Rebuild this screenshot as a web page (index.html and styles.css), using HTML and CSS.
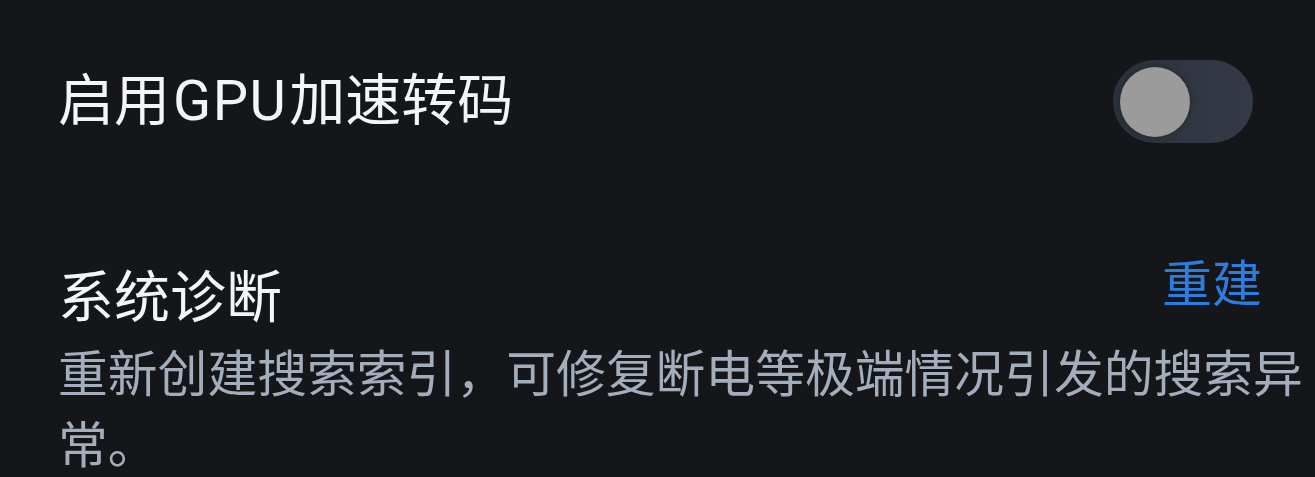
FILE: index.html
```html
<!DOCTYPE html>
<html lang="zh-CN">
<head>
<meta charset="utf-8">
<title>设置</title>
<link rel="stylesheet" href="styles.css">
</head>
<body>
<div class="settings">
  <div class="row row-toggle">
    <div class="row-title title-gpu">启用<span class="latin">GPU</span>加速转码</div>
    <div class="switch" role="switch" aria-checked="false">
      <div class="switch-knob"></div>
    </div>
  </div>
  <div class="row row-action">
    <div class="row-title title-diag">系统诊断</div>
    <div class="action">重建</div>
  </div>
  <div class="desc">重新创建搜索索引，可修复断电等极端情况引发的搜索异常。</div>
</div>
</body>
</html>
```

FILE: styles.css
```css
html, body {
  margin: 0;
  padding: 0;
  background: #14161a;
}
body {
  width: 1315px;
  height: 477px;
  overflow: hidden;
  font-family: Roboto, "Noto Sans CJK SC", sans-serif;
}
.settings {
  display: flex;
  flex-direction: column;
}
.row {
  display: flex;
  justify-content: space-between;
  align-items: flex-start;
}
.row-toggle {
  padding: 60px 62px 0 58px;
}
.row-title {
  font-size: 56px;
  line-height: 78px;
  color: #f4f5f6;
  white-space: nowrap;
}
.title-gpu {
  margin-top: 2px;
}
.latin {
  letter-spacing: 1.5px;
  margin: 0 2px 0 3px;
}
.switch {
  width: 140px;
  height: 83px;
  border-radius: 42px;
  background: linear-gradient(90deg, #2c323c 0%, #313742 50%, #353b46 100%);
  display: flex;
  align-items: center;
  padding-left: 7px;
  box-sizing: border-box;
}
.switch-knob {
  width: 70px;
  height: 70px;
  border-radius: 50%;
  background: #9b9b9c;
  box-shadow: 0 0 6px rgba(0, 0, 0, 0.35);
}
.row-action {
  margin-top: 116px;
  padding: 0 53px 0 58px;
}
.action {
  margin-top: 2px;
  font-size: 50px;
  line-height: 48px;
  color: #2b7ddf;
}
.desc {
  margin: 3px 0 0 58px;
  font-size: 49.8px;
  line-height: 71px;
  color: #a3adbc;
}
```
